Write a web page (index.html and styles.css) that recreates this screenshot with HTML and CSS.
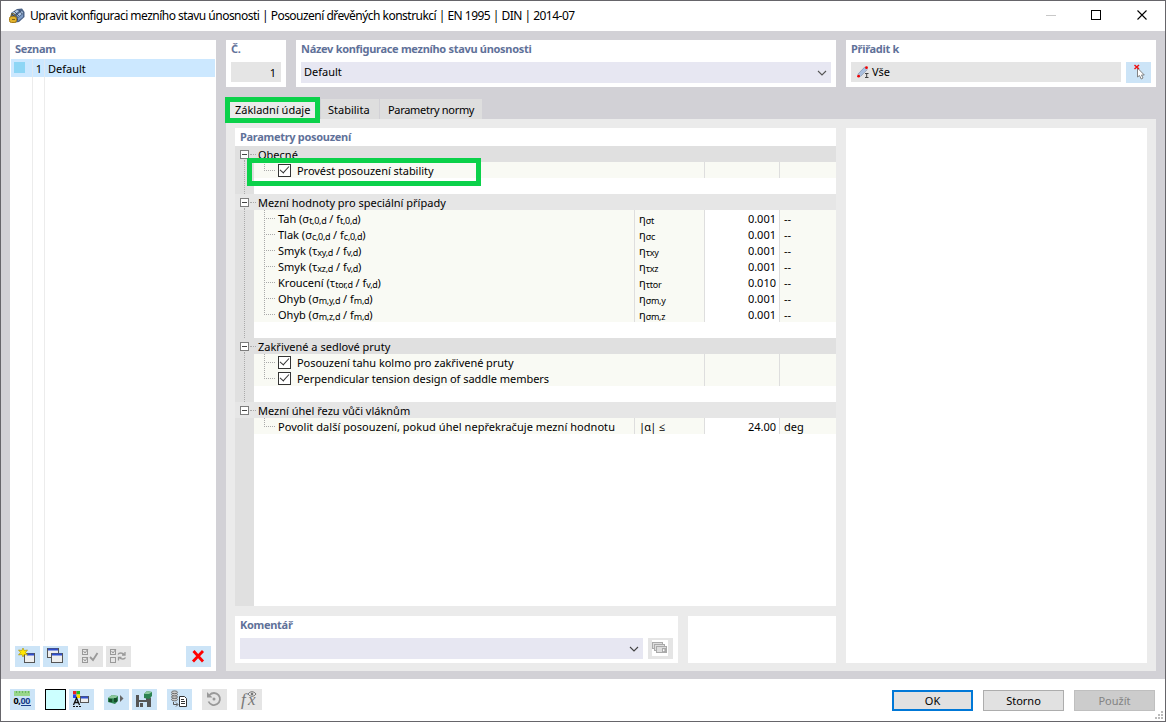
FILE: index.html
```html
<!DOCTYPE html>
<html lang="cs">
<head>
    <meta charset="UTF-8">
    <meta name="viewport" content="width=device-width, initial-scale=1.0">
    <title>Upravit konfiguraci mezního stavu únosnosti</title>
    <link rel="stylesheet" href="styles.css">
</head>
<body>
<div class="window">
    <header class="titlebar">
        <svg class="app-icon" width="16" height="16" viewBox="0 0 16 16">
            <path d="M2 5 8 1l5-.5L15.500 4v5L10 14l-6 1-2-4z" fill="#4c6387"/>
            <path d="M3 5l5-3 2 1-5 4zM8 7l5-4 1 2-5 4z" fill="#b4cbe8"/>
            <path d="M9 10l5-4v3l-5 4z" fill="#7f9cc6"/>
            <path d="M5 3l5 5M10 2l3 4M3 6l6 6" stroke="#34445e" stroke-width=".8" fill="none"/>
            <rect x="0.500" y="8.500" width="7" height="6" rx="2" fill="#e2b32e" stroke="#a67b14"/>
            <path d="M2 9V7.500a2 2 0 0 1 4 0V9M3 11.500h3" stroke="#7b6320" fill="none"/>
        </svg>
        <h1>Upravit konfiguraci mezního stavu únosnosti | Posouzení dřevěných konstrukcí | EN 1995 | DIN | 2014-07</h1>
        <svg class="window-controls" width="116" height="30" viewBox="0 0 116 30">
            <path d="M0 14.500h10" stroke="#c8c8c8"/>
            <rect x="45.500" y="9.500" width="9" height="9" fill="none" stroke="#000"/>
            <path d="M91.500 9.500l9 9M100.500 9.500l-9 9" stroke="#000" stroke-width="1.100"/>
        </svg>
    </header>

    <main class="content">
        <section class="panel list-panel">
            <h2>Seznam</h2>
            <div class="list">
                <div class="list-row">
                    <span class="swatch"></span>
                    <span class="list-no">1</span>
                    <span class="list-name">Default</span>
                </div>
            </div>
            <div class="list-tools">
                <button class="tool">
                    <svg width="25" height="21" viewBox="0 0 25 21">
                        <rect x="9.500" y="7.500" width="10" height="9" fill="#eee" stroke="#555"/>
                        <path d="M12 8.500h7" stroke="#2f4fd0" stroke-width="2"/>
                        <path d="M8 2l1.200 2.500L12.500 4 10.500 6.500l2 2.500-3.300-.5L8 11 6.800 8.500 3.500 9l2-2.500L3.500 4l3.300.5z" fill="#ffe600" stroke="#a58a00" stroke-width=".6"/>
                    </svg>
                </button>
                <button class="tool">
                    <svg width="25" height="21" viewBox="0 0 25 21">
                        <rect x="4.500" y="2.500" width="11" height="9" fill="#eee" stroke="#555"/>
                        <path d="M5 3.500h10" stroke="#2f4fd0" stroke-width="2"/>
                        <rect x="8.500" y="7.500" width="11" height="9" fill="#eee" stroke="#555"/>
                        <path d="M9 8.500h10" stroke="#2f4fd0" stroke-width="2"/>
                    </svg>
                </button>
                <button class="tool disabled gap">
                    <svg width="25" height="21" viewBox="0 0 25 21" fill="none" stroke="#999">
                        <rect x="4.500" y="3.500" width="5" height="5"/>
                        <rect x="4.500" y="11.500" width="5" height="5"/>
                        <path d="M5.500 5l1.500 2 3-4M5.500 13l1.500 2 3-4"/>
                        <path d="M12 11l3 3 4.500-7" stroke-width="1.800"/>
                    </svg>
                </button>
                <button class="tool disabled">
                    <svg width="25" height="21" viewBox="0 0 25 21" fill="none" stroke="#999">
                        <rect x="4.500" y="3.500" width="5" height="5"/>
                        <rect x="4.500" y="11.500" width="5" height="5"/>
                        <path d="M5.500 5l1.500 2 3-4"/>
                        <path d="M12 8.500c1-2 4-2 6.500 0M19 6v3h-3M19.500 11.500c-1 2-4 2-6.500 0M12.500 14.500v-3h3" stroke-width="1.300"/>
                    </svg>
                </button>
                <button class="tool delete">
                    <svg width="25" height="21" viewBox="0 0 25 21">
                        <path d="M7.500 5l9.500 10.500M17 5l-10 10.500" stroke="#f00" stroke-width="2.800"/>
                    </svg>
                </button>
            </div>
        </section>

        <div class="right-side">
            <div class="top-row">
                <section class="panel number-panel">
                    <h2>Č.</h2>
                    <div class="field number">1</div>
                </section>
                <section class="panel name-panel">
                    <h2>Název konfigurace mezního stavu únosnosti</h2>
                    <div class="combo">
                        <span>Default</span>
                        <svg width="10" height="6" viewBox="0 0 10 6"><path d="M1 1l4 4 4-4" fill="none" stroke="#555" stroke-width="1.100"/></svg>
                    </div>
                </section>
                <section class="panel assign-panel">
                    <h2>Přiřadit k</h2>
                    <div class="field-row">
                        <div class="field assign">
                            <svg width="12" height="12" viewBox="0 0 12 12">
                                <path d="M2 9.500L9 2" stroke="#a9bfde" stroke-width="3.500"/>
                                <path d="M.5 8.500L8 .8M3.500 10.500l7-7" stroke="#71809c" stroke-width=".5"/>
                                <circle cx="1.600" cy="10.200" r="1.400" fill="#e00"/>
                                <circle cx="9.500" cy="1.700" r="1.400" fill="#e00"/>
                                <path d="M8 7.500h3.500M8 11.500h3.500M9.700 7.500v4" stroke="#444"/>
                            </svg>
                            <span>Vše</span>
                        </div>
                        <button class="tool">
                            <svg width="25" height="21" viewBox="0 0 25 21">
                                <path d="M11.500 6v9l2-1.500 1.700 3.500 1.800-1-1.500-3h2.800z" fill="#fff" stroke="#777" stroke-width=".9"/>
                                <path d="M8.500 3l4.500 4M13 3L8.500 7" stroke="#e11" stroke-width="1.500"/>
                            </svg>
                        </button>
                    </div>
                </section>
            </div>

            <nav class="tabs">
                <span class="tab active">Základní údaje</span>
                <span class="tab">Stabilita</span>
                <span class="tab">Parametry normy</span>
            </nav>

            <div class="page">
                <div class="page-left">
                    <section class="panel params">
                        <h2>Parametry posouzení</h2>
                        <div class="tree">
                            <div class="group">
                                <div class="group-head"><i class="expander"></i><span>Obecné</span></div>
                                <div class="item check-item">
                                    <div class="name"><i class="check"></i>Provést posouzení stability</div>
                                    <div class="value"></div><div class="unit"></div>
                                </div>
                            </div>
                            <div class="group">
                                <div class="group-head alt"><i class="expander"></i><span>Mezní hodnoty pro speciální případy</span></div>
                                <div class="item"><div class="name">Tah (σ<sub>t,0,d</sub> / f<sub>t,0,d</sub>)</div><div class="symbol">η<sub>σt</sub></div><div class="value">0.001</div><div class="unit">--</div></div>
                                <div class="item"><div class="name">Tlak (σ<sub>c,0,d</sub> / f<sub>c,0,d</sub>)</div><div class="symbol">η<sub>σc</sub></div><div class="value">0.001</div><div class="unit">--</div></div>
                                <div class="item"><div class="name">Smyk (τ<sub>xy,d</sub> / f<sub>v,d</sub>)</div><div class="symbol">η<sub>τxy</sub></div><div class="value">0.001</div><div class="unit">--</div></div>
                                <div class="item"><div class="name">Smyk (τ<sub>xz,d</sub> / f<sub>v,d</sub>)</div><div class="symbol">η<sub>τxz</sub></div><div class="value">0.001</div><div class="unit">--</div></div>
                                <div class="item"><div class="name">Kroucení (τ<sub>tor,d</sub> / f<sub>v,d</sub>)</div><div class="symbol">η<sub>τtor</sub></div><div class="value">0.010</div><div class="unit">--</div></div>
                                <div class="item"><div class="name">Ohyb (σ<sub>m,y,d</sub> / f<sub>m,d</sub>)</div><div class="symbol">η<sub>σm,y</sub></div><div class="value">0.001</div><div class="unit">--</div></div>
                                <div class="item"><div class="name">Ohyb (σ<sub>m,z,d</sub> / f<sub>m,d</sub>)</div><div class="symbol">η<sub>σm,z</sub></div><div class="value">0.001</div><div class="unit">--</div></div>
                            </div>
                            <div class="group">
                                <div class="group-head"><i class="expander"></i><span>Zakřivené a sedlové pruty</span></div>
                                <div class="item check-item">
                                    <div class="name"><i class="check"></i>Posouzení tahu kolmo pro zakřivené pruty</div>
                                    <div class="value"></div><div class="unit"></div>
                                </div>
                                <div class="item check-item">
                                    <div class="name"><i class="check"></i>Perpendicular tension design of saddle members</div>
                                    <div class="value"></div><div class="unit"></div>
                                </div>
                            </div>
                            <div class="group">
                                <div class="group-head alt"><i class="expander"></i><span>Mezní úhel řezu vůči vláknům</span></div>
                                <div class="item"><div class="name wide">Povolit další posouzení, pokud úhel nepřekračuje mezní hodnotu</div><div class="symbol limit">|α| ≤</div><div class="value">24.00</div><div class="unit">deg</div></div>
                            </div>
                            <div class="highlight"></div>
                        </div>
                    </section>

                    <div class="bottom-row">
                        <section class="panel comment-panel">
                            <h2>Komentář</h2>
                            <div class="field-row">
                                <div class="combo">
                                    <span></span>
                                    <svg width="10" height="6" viewBox="0 0 10 6"><path d="M1 1l4 4 4-4" fill="none" stroke="#444" stroke-width="1.100"/></svg>
                                </div>
                                <button class="tool disabled">
                                    <svg width="25" height="21" viewBox="0 0 25 21">
                                        <rect x="4" y="2" width="16" height="16" fill="#fff"/>
                                        <g fill="#ddd" stroke="#aaa">
                                            <rect x="4.500" y="4.500" width="10" height="6"/>
                                            <rect x="6.500" y="6.500" width="10" height="6"/>
                                            <rect x="8.500" y="8.500" width="10" height="6"/>
                                        </g>
                                        <path d="M14 10h4v4h-4z" fill="#aaa"/>
                                        <path d="M15 11l2 1-2 1.500z" fill="#fff"/>
                                    </svg>
                                </button>
                            </div>
                        </section>
                        <section class="panel blank-panel"></section>
                    </div>
                </div>
                <section class="panel preview"></section>
            </div>
        </div>
    </main>

    <footer class="footer">
        <button class="tool">
            <svg width="25" height="21" viewBox="0 0 25 21">
                <rect x="4" y="2" width="16" height="5" fill="#98d68b"/>
                <path d="M6.500 2v2M9.500 2v2M12.500 2v2M15.500 2v2M18.500 2v2" stroke="#6bb763"/>
                <text x="3.500" y="15" class="digits" textLength="17">0,<tspan fill="#1a3e8c">00</tspan></text>
                <path d="M11 16.500h10" stroke="#1a3e8c"/>
            </svg>
        </button>
        <span class="color-box"></span>
        <button class="tool near">
            <svg width="25" height="21" viewBox="0 0 25 21">
                <path d="M4 2h3.500v3.500H4z" fill="#e22"/><path d="M7.500 2H11v3.500H7.500z" fill="#2b2"/>
                <path d="M4 5.500h3.500V9H4z" fill="#24e"/><path d="M7.500 5.500H11V9H7.500z" fill="#fd0"/>
                <path d="M4.500 16l3-7 3 7M5.500 13.500h4" fill="none" stroke="#111" stroke-width="1.300"/>
                <path d="M4 17.500h8" stroke="#111" stroke-dasharray="2 1"/>
                <rect x="11.500" y="7.500" width="8" height="6" fill="#eee" stroke="#555"/>
                <path d="M12 8.500h7" stroke="#2f4fd0" stroke-width="2"/>
            </svg>
        </button>
        <button class="tool gap">
            <svg width="25" height="21" viewBox="0 0 25 21">
                <path d="M4 9l4-3 6 1v5l-3 3-7-2z" fill="#2d8350"/>
                <path d="M4 9l4-3 6 1-3 2.500z" fill="#8cc79c"/>
                <path d="M5 10h3v3H5zM10 9h3v4h-3z" fill="#164c2c"/>
                <path d="M16 6l3.500 3.500L16 13z" fill="#666"/>
            </svg>
        </button>
        <button class="tool near">
            <svg width="25" height="21" viewBox="0 0 25 21">
                <path d="M4 6h12l3 3v9H4z" fill="#555"/>
                <path d="M7 6h7v5H7z" fill="#cce4f7"/>
                <path d="M7 13h8v5H7z" fill="#cce4f7"/>
                <path d="M8 14h3v4H8z" fill="#555"/>
                <path d="M12 5l3-3 5 1v4l-3 3-5-1z" fill="#2d8350"/>
                <path d="M12 5l3-3 5 1-3 2z" fill="#8cc79c"/>
            </svg>
        </button>
        <button class="tool gap">
            <svg width="25" height="21" viewBox="0 0 25 21">
                <g fill="#ccc" stroke="#666" stroke-width=".9">
                    <ellipse cx="7.500" cy="10.500" rx="3" ry="1.400"/>
                    <ellipse cx="7.500" cy="8" rx="3" ry="1.400"/>
                    <ellipse cx="7.500" cy="5.500" rx="3" ry="1.400"/>
                    <ellipse cx="7.500" cy="3.300" rx="3" ry="1.400"/>
                </g>
                <path d="M6.500 13v2.500h4M9 13.500l2 2-2 2" fill="none" stroke="#555"/>
                <path d="M12.500 7.500h5l2 2v8h-7z" fill="#fff" stroke="#333"/>
                <path d="M14 10.500h3M14 12.500h4M14 14.500h4" stroke="#333"/>
            </svg>
        </button>
        <button class="tool disabled gap">
            <svg width="25" height="21" viewBox="0 0 25 21">
                <path d="M7.500 6a6 6 0 1 1-1 6.500" fill="none" stroke="#999" stroke-width="1.800"/>
                <path d="M5 3v5.500h5.500z" fill="#999"/>
                <circle cx="12" cy="10" r="1.500" fill="#999"/>
            </svg>
        </button>
        <button class="tool disabled gap">
            <svg width="25" height="21" viewBox="0 0 25 21">
                <text x="4" y="15.500" class="fx">f</text>
                <text x="11" y="15.500" class="fx">x</text>
                <path d="M11 5c2-3 6-3 8 0-2 3-6 3-8 0z" fill="none" stroke="#777"/>
                <circle cx="15" cy="5" r="1.300" fill="#777"/>
            </svg>
        </button>
        <div class="actions">
            <button class="btn primary">OK</button>
            <button class="btn">Storno</button>
            <button class="btn off">Použít</button>
        </div>
        <svg class="grip" width="8" height="8" viewBox="0 0 8 8" fill="#bbb">
            <path d="M6 0h2v2H6zM3 3h2v2H3zM6 3h2v2H6zM0 6h2v2H0zM3 6h2v2H3zM6 6h2v2H6z"/>
        </svg>
    </footer>
</div>
</body>
</html>
```
FILE: styles.css
```css
* {
    box-sizing: border-box;
}
body {
    margin: 0;
    padding: 1px;
    height: 722px;
    background: #66656a;
    font-family: "Noto Sans", "Open Sans", sans-serif;
    font-size: 11px;
    color: #000;
    overflow: hidden;
}
.window {
    display: flex;
    flex-direction: column;
    height: 720px;
    background: #fff;
}
h1, h2 {
    margin: 0;
    white-space: nowrap;
}
button {
    padding: 0;
    border: 0;
    font: inherit;
}
svg {
    display: block;
    flex: none;
}

/* title bar */
.titlebar {
    display: flex;
    align-items: center;
    height: 30px;
    padding-left: 8px;
}
.titlebar h1 {
    margin: -1px 0 0 5px;
    font-size: 12px;
    font-weight: normal;
    letter-spacing: -0.52px;
}
.window-controls {
    margin-left: auto;
    margin-right: 3px;
}

.content {
    display: flex;
    gap: 10px;
    height: 648px;
    padding: 9px 9px 8px;
    background: #d2d1d6;
}
.panel {
    background: #fff;
}
.panel h2 {
    height: 22px;
    padding-left: 5px;
    line-height: 18px;
    font-size: 11px;
    font-weight: bold;
    letter-spacing: -0.3px;
    color: #5f7199;
}

/* list on the left */
.list-panel {
    display: flex;
    flex-direction: column;
    width: 206px;
}
.list-panel h2 {
    height: 19px;
}
.list {
    height: 582px;
    margin: 0 1px;
    background: linear-gradient(#ececec, #ececec) 21px 0 / 1px 100% no-repeat,
                linear-gradient(#ececec, #ececec) 33px 0 / 1px 100% no-repeat;
}
.list-row {
    display: flex;
    align-items: center;
    height: 18px;
    padding-left: 3px;
    background: linear-gradient(#dfe9f2, #dfe9f2) 21px 0 / 1px 100% no-repeat,
                linear-gradient(#dfe9f2, #dfe9f2) 33px 0 / 1px 100% no-repeat, #cce8ff;
}
.swatch {
    width: 11px;
    height: 11px;
    margin-top: -1px;
    background: #8ed6f5;
}
.list-no {
    width: 17px;
    text-align: right;
}
.list-name {
    margin-left: 6px;
}
.list-tools {
    display: flex;
    gap: 3px;
    padding: 5px 5px 0;
}
.tool {
    width: 25px;
    height: 21px;
    flex: none;
    background: #cce4f7;
}
.tool.disabled {
    background: #e5e5e5;
}
.list-tools .gap {
    margin-left: 7px;
}
.delete {
    margin-left: auto;
}

/* header fields */
.right-side {
    display: flex;
    flex-direction: column;
    width: 930px;
}
.top-row {
    display: flex;
    gap: 10px;
    height: 47px;
}
.number-panel {
    width: 60px;
}
.name-panel {
    width: 540px;
}
.assign-panel {
    width: 310px;
}
.field {
    height: 20px;
    margin: 0 5px;
    line-height: 22px;
    background: #e5e5e5;
}
.number {
    padding-right: 5px;
    text-align: right;
}
.combo {
    display: flex;
    align-items: center;
    justify-content: space-between;
    height: 21px;
    margin: 0 5px;
    padding: 0 4px 0 3px;
    line-height: 19px;
    background: #e7e7f2;
}
.combo span {
    margin-top: -2px;
}
.field-row {
    display: flex;
}
.assign {
    display: flex;
    align-items: center;
    gap: 3px;
    width: 270px;
    padding-left: 6px;
}

/* tabs */
.tabs {
    display: flex;
    gap: 1px;
    height: 20px;
    margin-top: 12px;
}
.tab {
    position: relative;
    line-height: 22px;
    background: #dedede;
    white-space: nowrap;
}
.tab:nth-child(1) { width: 94px; padding-left: 9px; }
.tab:nth-child(2) { width: 58px; padding-left: 7px; }
.tab:nth-child(3) { width: 102px; padding-left: 8px; letter-spacing: -0.3px; }
.tab.active {
    background: #ebebeb;
}
.tab.active::after {
    content: "";
    position: absolute;
    z-index: 2;
    left: -1px;
    top: -2px;
    width: 85px;
    height: 16px;
    border: 5px solid #0bd14a;
}

.page {
    display: flex;
    gap: 10px;
    height: 552px;
    padding: 9px 9px 8px;
    background: #ebebeb;
}
.page-left {
    display: flex;
    flex-direction: column;
    gap: 10px;
    width: 601px;
}
.params {
    height: 478px;
}
.params h2 {
    height: 18px;
}
.preview {
    width: 301px;
}

/* parameter tree */
.tree {
    position: relative;
    height: 460px;
    background: linear-gradient(#e0e0e0, #e0e0e0) 0 0 / 19px 100% no-repeat;
}
.group {
    position: relative;
    padding-bottom: 16px;
}
.group:not(:nth-child(4))::before {
    content: "";
    position: absolute;
    left: 9px;
    top: 14px;
    bottom: -4px;
    border-left: 1px dotted #aaa;
}
.group-head {
    display: flex;
    height: 16px;
    padding-left: 5px;
    line-height: 18px;
    background: #e0e0e0;
}
.group-head.alt {
    background: #e6e6e6;
}
.expander {
    position: relative;
    width: 9px;
    height: 9px;
    margin: 4px 9px 0 0;
    border: 1px solid #7d7d7d;
    background: linear-gradient(#444, #444) 1px 3px / 5px 1px no-repeat #fff;
}
.expander::after {
    content: "";
    position: absolute;
    left: 9px;
    top: 3px;
    width: 6px;
    border-top: 1px dotted #aaa;
}
.item {
    display: grid;
    grid-template-columns: 380px 70px 75px 57px;
    height: 16px;
    margin-left: 19px;
    line-height: 18px;
    background: #f9faf4;
    white-space: nowrap;
}
.check-item {
    grid-template-columns: 450px 75px 57px;
}
.item > div {
    height: 16px;
}
.name {
    position: relative;
    padding-left: 24px;
}
.name.wide {
    letter-spacing: 0.05px;
}
.name::before {
    content: "";
    position: absolute;
    left: 10px;
    top: -8px;
    width: 10px;
    height: 16px;
    border-left: 1px dotted #aaa;
    border-bottom: 1px dotted #aaa;
}
.group-head + .item .name::before {
    top: 0;
    height: 8px;
}
.check-item .name {
    display: flex;
    letter-spacing: -0.04px;
}
.check {
    width: 13px;
    height: 13px;
    margin: 2px 6px 0 0;
    border: 1px solid #333;
    background: #fff;
    position: relative;
}
.check::after {
    content: "";
    position: absolute;
    left: 1px;
    top: 1px;
    width: 8px;
    height: 4px;
    border-left: 1.3px solid #333;
    border-bottom: 1.3px solid #333;
    transform: rotate(-48deg);
}
.symbol, .value, .unit {
    border-left: 1px solid #dedede;
    padding-left: 4px;
}
.limit {
    letter-spacing: -0.8px;
    word-spacing: 1px;
}
.value {
    padding-right: 3px;
    text-align: right;
}
.item:not(.check-item) .value {
    background: #fff;
}
sub {
    font-size: 9px;
    line-height: 0;
    letter-spacing: -0.3px;
    vertical-align: -1px;
}
.highlight {
    position: absolute;
    left: 12px;
    top: 12px;
    width: 234px;
    height: 28px;
    border: 5px solid #0bd14a;
}

.bottom-row {
    display: flex;
    gap: 10px;
    height: 47px;
}
.comment-panel {
    width: 443px;
}
.comment-panel .combo {
    width: 403px;
}
.blank-panel {
    width: 148px;
}

/* footer */
.footer {
    position: relative;
    display: flex;
    height: 42px;
    padding: 10px 10px 0 9px;
}
.footer .near {
    margin-left: 3px;
}
.footer .gap {
    margin-left: 10px;
}
.color-box {
    width: 21px;
    height: 21px;
    margin-left: 10px;
    border: 1px solid #000;
    background: #ccffff;
}
.digits {
    font-size: 9px;
    font-weight: bold;
}
.fx {
    font: italic 17px "Liberation Serif", serif;
    fill: #777;
}
.actions {
    display: flex;
    gap: 10px;
    margin: 1px 0 0 auto;
}
.btn {
    width: 81px;
    height: 21px;
    border: 1px solid #adadad;
    background: #e1e1e1;
}
.btn.primary {
    border: 2px solid #0078d7;
}
.btn.off {
    border-color: #bfbfbf;
    background: #ccc;
    color: #838383;
}
.grip {
    position: absolute;
    right: 2px;
    bottom: 2px;
}
```
